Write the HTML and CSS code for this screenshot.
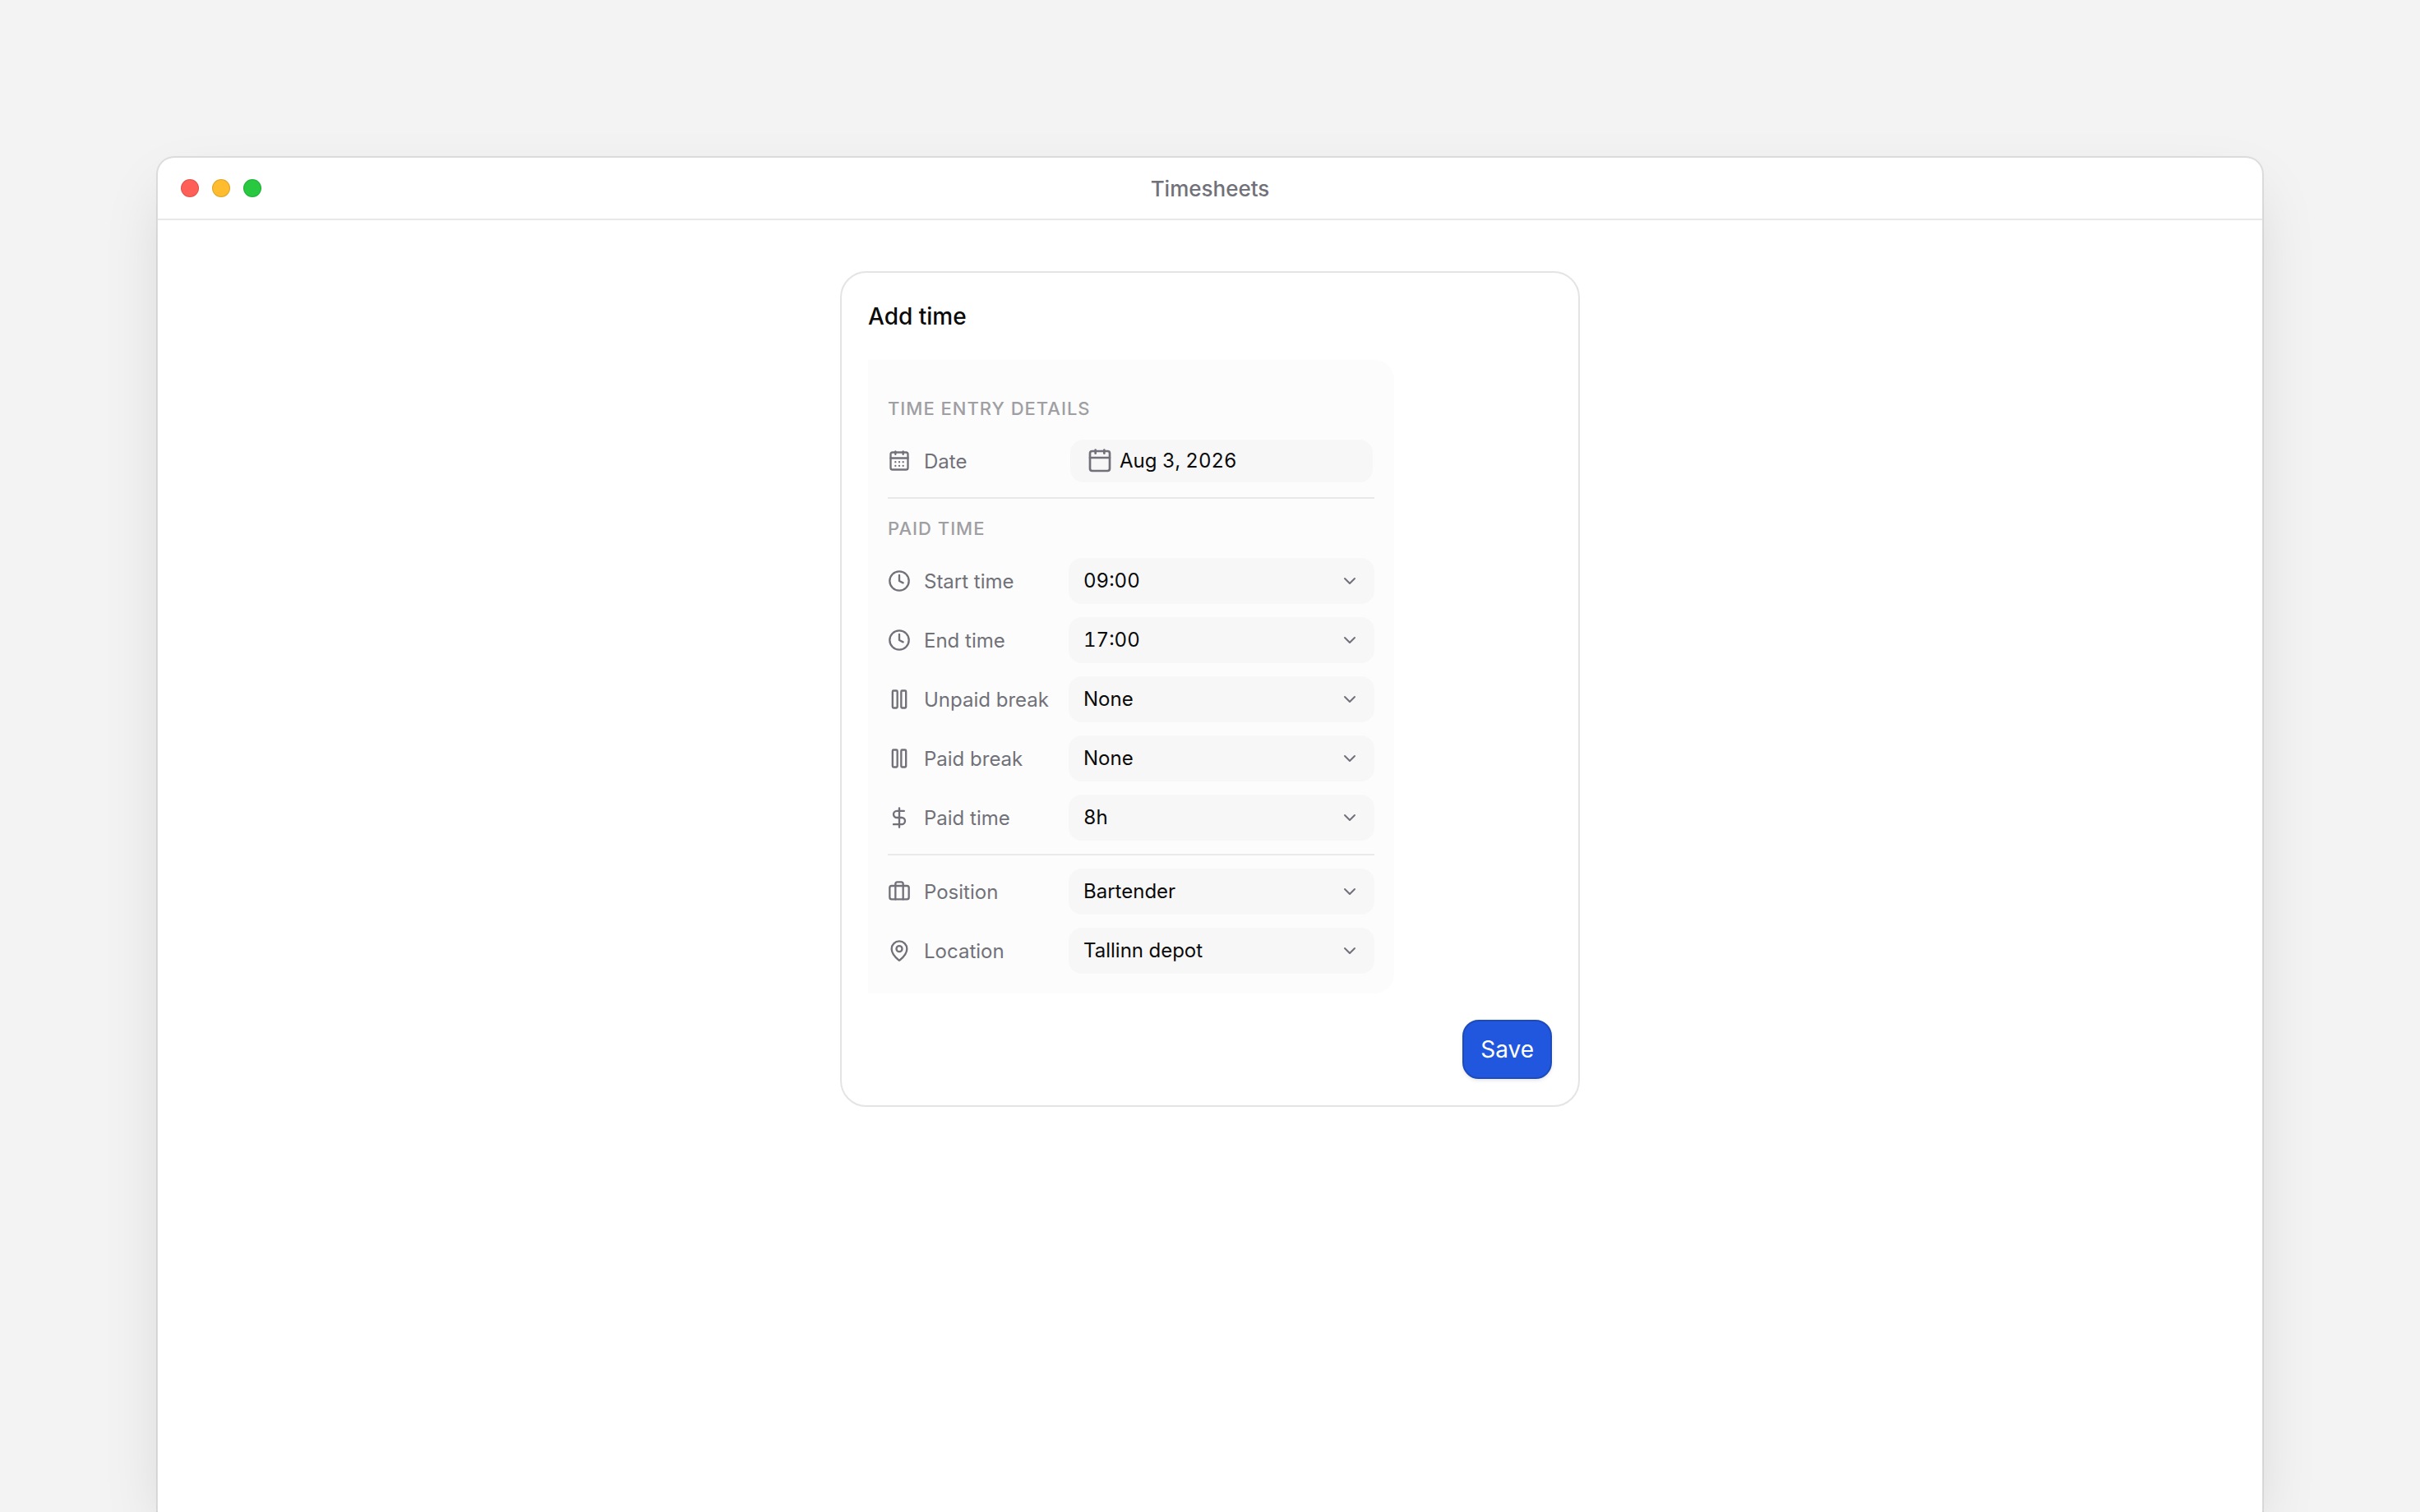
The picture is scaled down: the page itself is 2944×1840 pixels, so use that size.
FILE: index.html
```
<!DOCTYPE html>
<html lang="en">
<head>
    <meta charset="UTF-8" />
    <meta name="viewport" content="width=device-width, initial-scale=1" />
    <title>Timesheets</title>
    <link rel="stylesheet" href="styles.css">
</head>
<body>

<!-- Shared icons -->
<svg class="sprite" aria-hidden="true">
    <symbol id="calendar" viewBox="0 0 24 24">
        <rect x="3" y="3" width="18" height="18" rx="2" />
        <path d="M8 2v3M16 2v3M3 9h18" />
    </symbol>
    <symbol id="calendar-days" viewBox="0 0 24 24">
        <rect x="3" y="3" width="18" height="18" rx="2" />
        <path d="M8 2v3M16 2v3M3 9h18M8 13h.01M12 13h.01M16 13h.01M8 17h.01M12 17h.01M16 17h.01" />
    </symbol>
    <symbol id="clock" viewBox="0 0 24 24">
        <circle cx="12" cy="12" r="10" />
        <path d="M12 6v6l4 2" />
    </symbol>
    <symbol id="pause" viewBox="0 0 24 24">
        <rect x="14" y="3" width="5" height="18" rx="1" />
        <rect x="5" y="3" width="5" height="18" rx="1" />
    </symbol>
    <symbol id="dollar" viewBox="0 0 24 24">
        <path d="M12 2v20M17 5H9.5a3.5 3.5 0 0 0 0 7h5a3.5 3.5 0 0 1 0 7H6" />
    </symbol>
    <symbol id="briefcase" viewBox="0 0 24 24">
        <path d="M16 20V4a2 2 0 0 0-2-2h-4a2 2 0 0 0-2 2v16" />
        <rect x="2" y="6" width="20" height="14" rx="2" />
    </symbol>
    <symbol id="pin" viewBox="0 0 24 24">
        <path d="M20 10c0 4.993-5.539 10.193-7.399 11.799a1 1 0 0 1-1.202 0C9.539 20.193 4 14.993 4 10a8 8 0 0 1 16 0" />
        <circle cx="12" cy="10" r="3" />
    </symbol>
    <symbol id="chevron" viewBox="0 0 24 24">
        <path d="m6 9 6 6 6-6" />
    </symbol>
</svg>

<div class="window">
    <header class="titlebar">
        <div class="dots">
            <span class="dot red"></span>
            <span class="dot yellow"></span>
            <span class="dot green"></span>
        </div>
        <span class="window-title">Timesheets</span>
    </header>

    <main>
        <form class="card">
            <h1>Add time</h1>

            <div class="panel">
                <h2>Time entry details</h2>
                <div class="row">
                    <label for="date"><svg class="icon"><use href="#calendar-days" /></svg>Date</label>
                    <div class="date-field">
                        <svg class="icon"><use href="#calendar" /></svg>
                        <input type="text" id="date" value="Aug 3, 2026">
                    </div>
                </div>

                <hr>

                <h2>Paid time</h2>
                <div class="row">
                    <label for="start"><svg class="icon"><use href="#clock" /></svg>Start time</label>
                    <div class="select">
                        <select id="start"><option>09:00</option></select>
                        <svg class="chevron"><use href="#chevron" /></svg>
                    </div>
                </div>
                <div class="row">
                    <label for="end"><svg class="icon"><use href="#clock" /></svg>End time</label>
                    <div class="select">
                        <select id="end"><option>17:00</option></select>
                        <svg class="chevron"><use href="#chevron" /></svg>
                    </div>
                </div>
                <div class="row">
                    <label for="unpaid-break"><svg class="icon"><use href="#pause" /></svg>Unpaid break</label>
                    <div class="select">
                        <select id="unpaid-break"><option>None</option></select>
                        <svg class="chevron"><use href="#chevron" /></svg>
                    </div>
                </div>
                <div class="row">
                    <label for="paid-break"><svg class="icon"><use href="#pause" /></svg>Paid break</label>
                    <div class="select">
                        <select id="paid-break"><option>None</option></select>
                        <svg class="chevron"><use href="#chevron" /></svg>
                    </div>
                </div>
                <div class="row">
                    <label for="paid-time"><svg class="icon"><use href="#dollar" /></svg>Paid time</label>
                    <div class="select">
                        <select id="paid-time"><option>8h</option></select>
                        <svg class="chevron"><use href="#chevron" /></svg>
                    </div>
                </div>

                <hr>

                <div class="row">
                    <label for="position"><svg class="icon"><use href="#briefcase" /></svg>Position</label>
                    <div class="select">
                        <select id="position"><option>Bartender</option></select>
                        <svg class="chevron"><use href="#chevron" /></svg>
                    </div>
                </div>
                <div class="row">
                    <label for="location"><svg class="icon"><use href="#pin" /></svg>Location</label>
                    <div class="select">
                        <select id="location"><option>Tallinn depot</option></select>
                        <svg class="chevron"><use href="#chevron" /></svg>
                    </div>
                </div>
            </div>

            <button type="button" class="save">Save</button>
        </form>
    </main>
</div>

</body>
</html>
```

FILE: styles.css
```
* {
    box-sizing: border-box;
}
body {
    font-family: Inter, sans-serif;
    display: flex;
    min-height: 100vh;
    margin: 0;
    padding: 190px 190px 0;
    background-color: #f3f3f3;
    color: #0a0a0a;
}
.sprite {
    display: none;
}
svg {
    fill: none;
    stroke: #71717a;
    stroke-width: 2;
    stroke-linecap: round;
    stroke-linejoin: round;
    flex-shrink: 0;
}
/* Window */
.window {
    flex: 1;
    border: 2px solid rgba(0, 0, 0, 0.09);
    border-bottom: 0;
    border-radius: 22px 22px 0 0;
    background-color: #fff;
    background-clip: padding-box;
    box-shadow: 0 32px 80px -16px rgba(0, 0, 0, 0.15);
}
.titlebar {
    display: grid;
    grid-template-columns: 1fr auto 1fr;
    align-items: center;
    height: 76px;
    padding: 0 28px;
    border-bottom: 2px solid #e8e8e8;
}
.dots {
    display: flex;
    gap: 16px;
}
.dot {
    width: 22px;
    height: 22px;
    border-radius: 50%;
    box-shadow: inset 0 0 0 1px rgba(0, 0, 0, 0.12);
}
.red {
    background-color: #ff5f57;
}
.yellow {
    background-color: #febc2e;
}
.green {
    background-color: #28c840;
}
.window-title {
    font-size: 26px;
    font-weight: 500;
    color: #71717a;
}
main {
    display: flex;
    justify-content: center;
    padding: 62px 32px;
}
/* Form card */
.card {
    display: flex;
    flex-direction: column;
    gap: 32px;
    width: 100%;
    max-width: 900px;
    padding: 32px;
    border: 2px solid #e4e4e4;
    border-radius: 32px;
}
h1 {
    margin: 0;
    font-size: 28px;
    font-weight: 500;
    line-height: 42px;
}
.panel {
    display: flex;
    flex-direction: column;
    gap: 16px;
    max-width: 640px;
    padding: 39px 24px 24px;
    border-radius: 0 24px 24px 0;
    background-color: #fcfcfc;
}
h2 {
    margin: 0;
    font-size: 22px;
    font-weight: 500;
    line-height: 40px;
    letter-spacing: 1px;
    text-transform: uppercase;
    color: #9f9fa3;
}
hr {
    width: 100%;
    margin: 0;
    border: 0;
    border-top: 2px solid #e9e9e9;
}
.row {
    display: grid;
    grid-template-columns: 220px 1fr;
    align-items: center;
    height: 56px;
}
label {
    display: flex;
    align-items: center;
    gap: 16px;
    font-size: 24px;
    color: #71717a;
}
.icon {
    width: 28px;
    height: 28px;
}
.select {
    position: relative;
}
select,
input {
    width: 100%;
    border: 0;
    font-family: inherit;
    font-size: 24px;
    font-variant-numeric: tabular-nums;
    color: inherit;
    outline: none;
}
select {
    height: 56px;
    padding: 0 48px 2px 18px;
    border-radius: 16px;
    background-color: #f7f7f8;
    appearance: none;
}
.chevron {
    position: absolute;
    top: 16px;
    right: 18px;
    width: 24px;
    height: 24px;
    pointer-events: none;
}
.date-field {
    display: flex;
    align-items: center;
    gap: 8px;
    height: 52px;
    margin: 0 2px;
    padding: 0 20px;
    border-radius: 16px;
    background-color: #f7f7f8;
}
.date-field .icon {
    width: 32px;
    height: 32px;
}
input {
    padding: 0 0 2px;
    background: none;
}
.save {
    align-self: flex-end;
    height: 72px;
    padding: 0 20px;
    border: 2px solid #1d4bbb;
    border-radius: 20px;
    background-color: #2157df;
    box-shadow: 0 2px 4px rgba(0, 0, 0, 0.1);
    font-family: inherit;
    font-size: 28px;
    color: #fff;
}
```
